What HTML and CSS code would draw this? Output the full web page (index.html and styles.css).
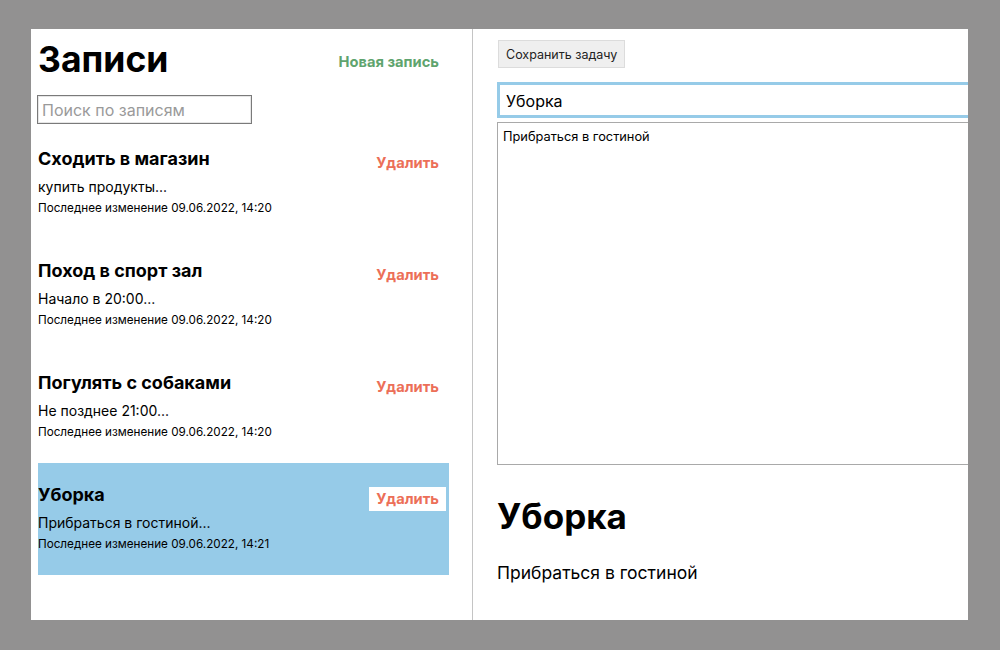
FILE: index.html
```html
<!DOCTYPE html>
<html lang="ru">
<head>
    <meta charset="UTF-8">
    <meta name="viewport" content="width=device-width, initial-scale=1.0">
    <title>Записи</title>
    <link rel="stylesheet" href="styles.css">
</head>
<body>
    <div class="app">
        <div class="sidebar">
            <div class="sidebar-header">
                <h1 class="sidebar-title">Записи</h1>
                <button class="btn-new">Новая запись</button>
            </div>
            <input type="text" class="search" placeholder="Поиск по записям">

            <div class="notes">
                <div class="note">
                    <div class="note-top">
                        <strong class="note-title">Сходить в магазин</strong>
                        <button class="btn-delete">Удалить</button>
                    </div>
                    <p class="note-preview">купить продукты...</p>
                    <small class="note-date">Последнее изменение 09.06.2022, 14:20</small>
                </div>
                <div class="note">
                    <div class="note-top">
                        <strong class="note-title">Поход в спорт зал</strong>
                        <button class="btn-delete">Удалить</button>
                    </div>
                    <p class="note-preview">Начало в 20:00...</p>
                    <small class="note-date">Последнее изменение 09.06.2022, 14:20</small>
                </div>
                <div class="note">
                    <div class="note-top">
                        <strong class="note-title">Погулять с собаками</strong>
                        <button class="btn-delete">Удалить</button>
                    </div>
                    <p class="note-preview">Не позднее 21:00...</p>
                    <small class="note-date">Последнее изменение 09.06.2022, 14:20</small>
                </div>
                <div class="note active">
                    <div class="note-top">
                        <strong class="note-title">Уборка</strong>
                        <button class="btn-delete">Удалить</button>
                    </div>
                    <p class="note-preview">Прибраться в гостиной...</p>
                    <small class="note-date">Последнее изменение 09.06.2022, 14:21</small>
                </div>
            </div>
        </div>

        <div class="main">
            <button class="btn-save">Сохранить задачу</button>
            <input type="text" class="edit-title" value="Уборка">
            <textarea class="edit-body">Прибраться в гостиной</textarea>
            <h1 class="preview-title">Уборка</h1>
            <p class="preview-body">Прибраться в гостиной</p>
        </div>
    </div>
</body>
</html>
```

FILE: styles.css
```css
body {
    font-family: Inter, "Liberation Sans", Arial, sans-serif;
    background-color: #929191;
    color: #000000;
    margin: 0;
    padding: 0;
}
.app {
    margin: 29px 32px 0 31px;
    height: 591px;
    background-color: #ffffff;
    display: flex;
    overflow: hidden;
}
.sidebar {
    width: 442px;
    flex-shrink: 0;
    border-right: 1px solid #c4c4c4;
    padding: 10px 23px 0 7px;
    box-sizing: border-box;
}
.sidebar-header {
    display: flex;
    justify-content: space-between;
    align-items: flex-start;
}
.sidebar-title {
    font-size: 35.5px;
    line-height: 42px;
    margin: 0;
}
.btn-new,
.btn-delete {
    font-family: inherit;
    font-size: 14.7px;
    font-weight: bold;
    line-height: 16px;
    padding: 4px 7px;
    border: none;
    background: none;
    cursor: pointer;
}
.btn-new {
    color: #5fa46e;
    margin-top: 11px;
    margin-right: 3px;
}
.btn-delete {
    color: #ec6f58;
    margin-top: 3px;
    margin-right: 3px;
}
.search {
    font-family: inherit;
    font-size: 16px;
    width: 215px;
    height: 29px;
    box-sizing: border-box;
    margin: 14px 0 0 -1px;
    padding: 2px 4px;
    border: 1px solid #7a7a7a;
    box-shadow: inset 0 0 0 1px #e6e6e6;
}
.search::placeholder {
    color: #9a9a9a;
}
.notes {
    margin-top: 3px;
}
.note {
    height: 112px;
    box-sizing: border-box;
    padding-top: 21px;
}
.note.active {
    background-color: #96cbe8;
}
.note.active .btn-delete {
    background-color: #ffffff;
}
.note-top {
    display: flex;
    justify-content: space-between;
    align-items: flex-start;
}
.note-title {
    font-size: 18px;
    line-height: 22px;
}
.note-preview {
    font-size: 14px;
    line-height: 20px;
    margin: 2px 0 0 0;
}
.note-date {
    display: block;
    font-size: 11.7px;
    line-height: 16px;
    margin-top: 3px;
}
.main {
    flex-grow: 1;
    padding: 11px 24px 0 24px;
    display: flex;
    flex-direction: column;
    align-items: flex-start;
}
.btn-save {
    font-family: inherit;
    font-size: 12.5px;
    height: 28px;
    padding: 0 7px;
    margin-left: 1px;
    background-color: #efefef;
    border: 1px solid #dcdcdc;
    color: #222;
}
.edit-title {
    font-family: inherit;
    font-size: 16px;
    width: 520px;
    height: 36px;
    box-sizing: border-box;
    margin-top: 14px;
    padding: 2px 6px 0 6px;
    border: 3px solid #96cbe8;
    outline: none;
    flex-shrink: 0;
}
.edit-body {
    font-family: inherit;
    font-size: 12.8px;
    width: 520px;
    height: 343px;
    box-sizing: border-box;
    margin-top: 4px;
    padding: 6px 5px;
    border: 1px solid #a9a9a9;
    resize: none;
    flex-shrink: 0;
}
.preview-title {
    font-size: 35px;
    line-height: 42px;
    margin: 30px 0 0 0;
}
.preview-body {
    font-size: 17.5px;
    line-height: 21px;
    margin: 25px 0 0 0;
}
```
